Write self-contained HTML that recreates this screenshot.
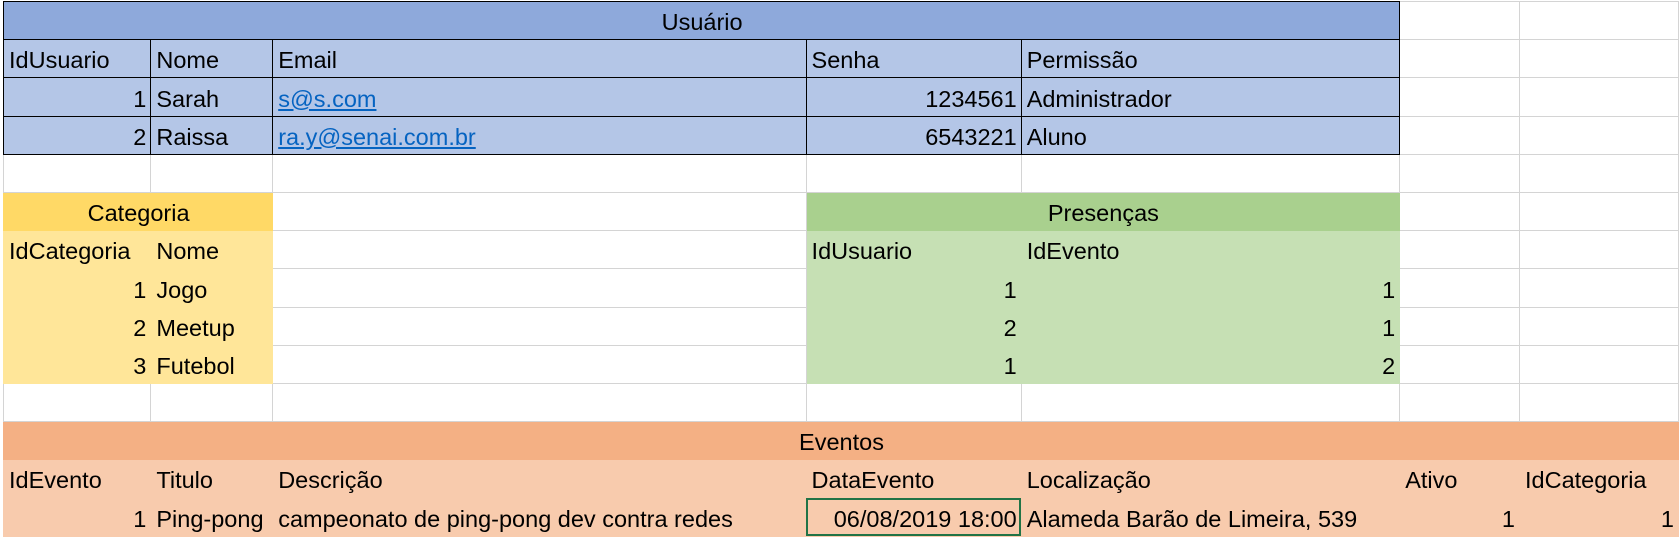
<!DOCTYPE html>
<html><head><meta charset="utf-8"><style>
body{margin:0;width:1679px;height:535px;overflow:hidden;background:#fff;font-family:"Liberation Sans",sans-serif;}
table{position:absolute;left:3px;top:1px;border-collapse:collapse;table-layout:fixed;font-size:23.5px;}
td{border:1px solid #d4d4d4;height:38.2px;padding:0 4px 3px 5px;vertical-align:bottom;white-space:nowrap;overflow:visible;box-sizing:border-box;line-height:28px;color:#000}
.r{text-align:right}.c{text-align:center}
.ub{background:#8ea9db;border:1.5px solid #000}.ul{background:#b4c6e7;border:1.5px solid #000}
.yb{background:#ffd966;border-color:#ffd966}.yl{background:#ffe699;border-color:#ffe699}
.gb{background:#a9d08e;border-color:#a9d08e}.gl{background:#c6e0b4;border-color:#c6e0b4}
.ob{background:#f4b084;border-color:#f4b084}.ol{background:#f8cbad;border-color:#f8cbad}
a{color:#0563c1;text-decoration:underline}
.sel{outline:2px solid #217346;outline-offset:-2px}
</style></head><body>
<table>
<colgroup><col style="width:148px"><col style="width:122px"><col style="width:536px"><col style="width:216px"><col style="width:380px"><col style="width:122px"><col style="width:160px"></colgroup>
<tr><td colspan="5" class="ub c">Usuário</td><td></td><td></td></tr>
<tr><td class="ul">IdUsuario</td><td class="ul">Nome</td><td class="ul">Email</td><td class="ul">Senha</td><td class="ul">Permissão</td><td></td><td></td></tr>
<tr><td class="ul r">1</td><td class="ul">Sarah</td><td class="ul"><a>s@s.com</a></td><td class="ul r">1234561</td><td class="ul">Administrador</td><td></td><td></td></tr>
<tr><td class="ul r">2</td><td class="ul">Raissa</td><td class="ul"><a>ra.y@senai.com.br</a></td><td class="ul r">6543221</td><td class="ul">Aluno</td><td></td><td></td></tr>
<tr><td></td><td></td><td></td><td></td><td></td><td></td><td></td></tr>
<tr><td colspan="2" class="yb c">Categoria</td><td></td><td colspan="2" class="gb c">Presenças</td><td></td><td></td></tr>
<tr><td class="yl">IdCategoria</td><td class="yl">Nome</td><td></td><td class="gl">IdUsuario</td><td class="gl">IdEvento</td><td></td><td></td></tr>
<tr><td class="yl r">1</td><td class="yl">Jogo</td><td></td><td class="gl r">1</td><td class="gl r">1</td><td></td><td></td></tr>
<tr><td class="yl r">2</td><td class="yl">Meetup</td><td></td><td class="gl r">2</td><td class="gl r">1</td><td></td><td></td></tr>
<tr><td class="yl r">3</td><td class="yl">Futebol</td><td></td><td class="gl r">1</td><td class="gl r">2</td><td></td><td></td></tr>
<tr><td></td><td></td><td></td><td></td><td></td><td></td><td></td></tr>
<tr><td colspan="7" class="ob c">Eventos</td></tr>
<tr><td class="ol">IdEvento</td><td class="ol">Titulo</td><td class="ol">Descrição</td><td class="ol">DataEvento</td><td class="ol">Localização</td><td class="ol">Ativo</td><td class="ol">IdCategoria</td></tr>
<tr><td class="ol r">1</td><td class="ol">Ping-pong</td><td class="ol">campeonato de ping-pong dev contra redes</td><td class="ol r sel">06/08/2019 18:00</td><td class="ol">Alameda Barão de Limeira, 539</td><td class="ol r">1</td><td class="ol r">1</td></tr>
</table>
</body></html>
